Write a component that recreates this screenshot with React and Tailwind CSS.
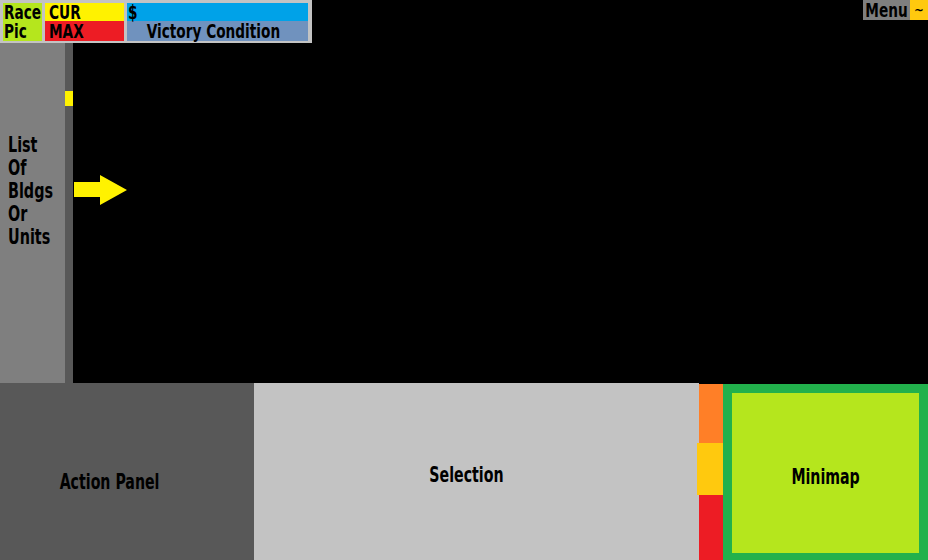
import { useState } from "react";

const font = { fontFamily: '"Liberation Sans Narrow", "DejaVu Sans Condensed", "Liberation Sans", sans-serif' };

// the reference uses a very narrow heavy face, so squeeze the condensed one a bit more
function Narrow({ children, className = "" }) {
  return <span className={"inline-block whitespace-nowrap " + className}>{children}</span>;
}

function Hud() {
  return (
    <div className="w-[312px] h-[43px] bg-[#c3c3c3] pt-[3px] pl-[3px] flex gap-[3px] text-black font-bold text-[19px] leading-[16px]">
      <div className="w-[39px] h-[38px] bg-[#b5e61d] flex flex-col pl-px">
        <span className="h-[18px] flex items-center">
          <Narrow className="scale-x-[0.8] origin-left">Race</Narrow>
        </span>
        <span className="h-[20px] flex items-center">
          <Narrow className="scale-x-[0.8] origin-left">Pic</Narrow>
        </span>
      </div>
      <div className="w-[79px] h-[38px] flex flex-col">
        <div className="h-[18px] bg-[#fff200] flex items-center pl-[4px]">
          <Narrow className="scale-x-[0.8] origin-left">CUR</Narrow>
        </div>
        <div className="h-[20px] bg-[#ed1c24] flex items-center pl-[4px]">
          <Narrow className="scale-x-[0.8] origin-left">MAX</Narrow>
        </div>
      </div>
      <div className="w-[181px] h-[38px] flex flex-col">
        <div className="h-[18px] bg-[#00a2e8] flex items-center pl-px">
          <Narrow className="scale-x-[0.8] origin-left">$</Narrow>
        </div>
        <div className="h-[20px] bg-[#7092be] flex items-center justify-center pr-[8px]">
          <Narrow className="scale-x-[0.8]">Victory Condition</Narrow>
        </div>
      </div>
    </div>
  );
}

function Menu() {
  return (
    <div className="flex h-[20px] font-bold text-[19px] leading-[16px] text-black">
      <div className="w-[47px] bg-[#7f7f7f] flex items-center justify-center">
        <Narrow className="scale-x-[0.8]">Menu</Narrow>
      </div>
      <div className="w-[18px] bg-[#ffc90e] flex items-center justify-center text-[13px]">~</div>
    </div>
  );
}

function BuildList() {
  const lines = ["List", "Of", "Bldgs", "Or", "Units"];
  return (
    <div className="w-[65px] h-full bg-[#7f7f7f] pt-[91px] pl-[8px] font-bold text-[21px] leading-[23px] text-black">
      {lines.map((l) => (
        <div key={l}>
          <Narrow className="scale-x-[0.76] origin-left">{l}</Narrow>
        </div>
      ))}
    </div>
  );
}

function Scrollbar() {
  return (
    <div className="w-[8px] h-full bg-[#585858] pt-[48px]">
      <div className="h-[15px] bg-[#fff200]" />
    </div>
  );
}

function Arrow() {
  return (
    <svg width="53" height="30" viewBox="0 0 53 30">
      <path d="M0 7 H26 V0 L53 15 L26 30 V22 H0 Z" fill="#fff200" />
    </svg>
  );
}

export default function App() {
  const [selected] = useState(null);

  return (
    <div className="w-[928px] h-[560px] bg-black flex flex-col overflow-hidden" style={font}>
      <div className="h-[383px] flex flex-col">
        <div className="h-[43px] flex justify-between">
          <Hud />
          <Menu />
        </div>
        <div className="flex-1 flex">
          <BuildList />
          <Scrollbar />
          <div className="flex-1 pt-[132px] pl-px">
            <Arrow />
          </div>
        </div>
      </div>

      <div className="flex-1 flex font-bold text-[21px] text-black">
        <div className="w-[254px] bg-[#585858] flex items-center justify-center pr-[34px] pt-[22px]">
          <Narrow className="scale-x-[0.75]">Action Panel</Narrow>
        </div>
        <div className="w-[445px] bg-[#c3c3c3] flex items-center justify-center pr-[20px] pt-[8px]">
          <Narrow className="scale-x-[0.75]">{selected || "Selection"}</Narrow>
        </div>
        <div className="w-[24px] mt-px flex flex-col">
          <div className="h-[59px] bg-[#ff7f27]" />
          <div className="h-[52px] bg-[#ffc90e] -ml-[2px]" />
          <div className="flex-1 bg-[#ed1c24]" />
        </div>
        <div className="flex-1 mt-px bg-[#22b14c] pt-[9px] px-[9px] pb-[7px] flex">
          <div className="flex-1 bg-[#b5e61d] flex items-center justify-center pt-[10px]">
            <Narrow className="scale-x-[0.75]">Minimap</Narrow>
          </div>
        </div>
      </div>
    </div>
  );
}
